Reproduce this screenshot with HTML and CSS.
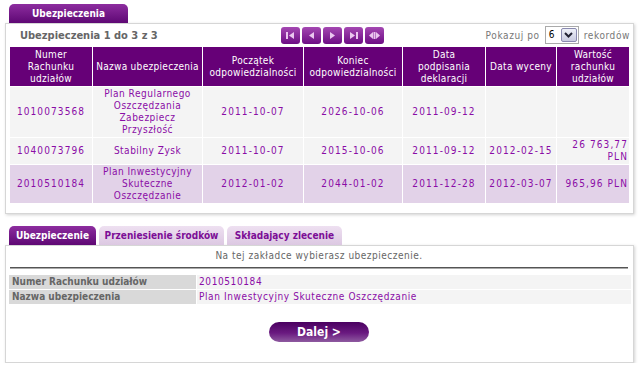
FILE: index.html
```html
<!DOCTYPE html>
<html lang="pl">

<head>
    <meta charset="UTF-8">
    <meta name="viewport" content="width=device-width, initial-scale=1.0">
    <title>Ubezpieczenia</title>
    <link rel="stylesheet" href="styles.css">
</head>

<body>
    <!-- Lista ubezpieczen -->
    <div class="box">
        <div class="tabs">
            <span class="tab active">Ubezpieczenia</span>
        </div>
        <div class="panel">
            <div class="toolbar">
                <div class="title">Ubezpieczenia 1 do 3 z 3</div>
                <div class="pager">
                    <span class="pg"><svg width="9" height="7" viewBox="0 0 9 7"><rect x="0" y="0" width="2" height="7"/><polygon points="8,0 8,7 3,3.5"/></svg></span>
                    <span class="pg"><svg width="9" height="7" viewBox="0 0 9 7"><polygon points="7,0 7,7 2,3.5"/></svg></span>
                    <span class="pg"><svg width="9" height="7" viewBox="0 0 9 7"><polygon points="2,0 2,7 7,3.5"/></svg></span>
                    <span class="pg"><svg width="9" height="7" viewBox="0 0 9 7"><polygon points="1,0 1,7 6,3.5"/><rect x="7" y="0" width="2" height="7"/></svg></span>
                    <span class="pg"><svg width="11" height="7" viewBox="0 0 11 7"><polygon points="4,0 4,7 0,3.5"/><rect x="4.5" y="0" width="2" height="7"/><polygon points="7,0 7,7 11,3.5"/></svg></span>
                </div>
                <div class="page-size">
                    Pokazuj po
                    <span class="select"><span class="val">6</span><span class="arrow"><svg width="9" height="6" viewBox="0 0 9 6"><polyline points="1,1 4.5,4.5 8,1" fill="none" stroke="#223" stroke-width="2"/></svg></span></span>
                    rekordów
                </div>
            </div>

            <table class="grid">
                <colgroup>
                    <col style="width: 82px">
                    <col style="width: 109px">
                    <col style="width: 100px">
                    <col style="width: 98px">
                    <col style="width: 82px">
                    <col style="width: 70px">
                    <col style="width: 72px">
                </colgroup>
                <thead>
                    <tr>
                        <th>Numer Rachunku udziałów</th>
                        <th>Nazwa ubezpieczenia</th>
                        <th>Początek odpowiedzialności</th>
                        <th>Koniec odpowiedzialności</th>
                        <th class="narrow">Data podpisania deklaracji</th>
                        <th>Data wyceny</th>
                        <th>Wartość rachunku udziałów</th>
                    </tr>
                </thead>
                <tbody>
                    <tr>
                        <td class="num">1010073568</td>
                        <td>Plan Regularnego Oszczędzania Zabezpiecz Przyszłość</td>
                        <td class="num">2011-10-07</td>
                        <td class="num">2026-10-06</td>
                        <td class="num">2011-09-12</td>
                        <td class="num"></td>
                        <td class="num amount"></td>
                    </tr>
                    <tr>
                        <td class="num">1040073796</td>
                        <td>Stabilny Zysk</td>
                        <td class="num">2011-10-07</td>
                        <td class="num">2015-10-06</td>
                        <td class="num">2011-09-12</td>
                        <td class="num">2012-02-15</td>
                        <td class="num amount">26 763,77 PLN</td>
                    </tr>
                    <tr class="selected">
                        <td class="num">2010510184</td>
                        <td>Plan Inwestycyjny Skuteczne Oszczędzanie</td>
                        <td class="num">2012-01-02</td>
                        <td class="num">2044-01-02</td>
                        <td class="num">2011-12-28</td>
                        <td class="num">2012-03-07</td>
                        <td class="num amount">965,96 PLN</td>
                    </tr>
                </tbody>
            </table>
        </div>
    </div>

    <!-- Szczegoly wybranego ubezpieczenia -->
    <div class="box second">
        <div class="tabs">
            <span class="tab active t1">Ubezpieczenie</span>
            <span class="tab t2">Przeniesienie środków</span>
            <span class="tab t3">Składający zlecenie</span>
        </div>
        <div class="panel details">
            <p class="intro">Na tej zakładce wybierasz ubezpieczenie.</p>
            <div class="rule"></div>
            <table class="info">
                <tr>
                    <th>Numer Rachunku udziałów</th>
                    <td>2010510184</td>
                </tr>
                <tr>
                    <th>Nazwa ubezpieczenia</th>
                    <td>Plan Inwestycyjny Skuteczne Oszczędzanie</td>
                </tr>
            </table>
            <div class="actions">
                <button class="btn">Dalej &gt;</button>
            </div>
        </div>
    </div>
</body>

</html>
```

FILE: styles.css
```css
body {
    margin: 0;
    font-family: Tahoma, "DejaVu Sans Condensed", "DejaVu Sans", sans-serif;
    font-size: 10px;
    color: #666;
    background-color: white;
}

.box {
    margin: 4px 7px 0 5px;
}

.box.second {
    margin-top: 12px;
}

.tabs {
    display: flex;
    gap: 3px;
    padding-left: 4px;
}

.tab {
    height: 19px;
    line-height: 20px;
    padding: 0 7px;
    border-radius: 5px 5px 0 0;
    font-weight: bold;
    text-align: center;
    color: #7c0e96;
    background: linear-gradient(#eee0f1, #dcc8e2);
}

.tab.active {
    color: white;
    background: linear-gradient(#8d2d9f, #5e0874);
}

.box > .tabs > .tab:only-child {
    width: 119px;
    padding: 0;
}

.t1 { width: 87px; padding: 0; }
.t2 { width: 125px; padding: 0; }
.t3 { width: 115px; padding: 0; }

.panel {
    border: 1px solid #d6d6d6;
    box-shadow: 1px 1px 3px rgba(0, 0, 0, 0.18);
    padding: 0 3px 9px 3px;
    background-color: white;
}

/* toolbar nad tabela */
.toolbar {
    display: flex;
    align-items: center;
    height: 22px;
}

.title {
    width: 261px;
    padding-left: 11px;
    font-weight: bold;
    font-size: 11px;
    color: #666;
}

.pager {
    display: flex;
    gap: 2px;
}

.pg {
    width: 19px;
    height: 17px;
    border-radius: 3px;
    display: flex;
    align-items: center;
    justify-content: center;
    background: linear-gradient(#a448b2, #6d0c84);
}

.pg svg {
    fill: #eac6ef;
}

.page-size {
    margin-left: auto;
    display: flex;
    align-items: center;
    gap: 5px;
    letter-spacing: 0.6px;
    color: #777;
    font-size: 10px;
}

.select {
    display: flex;
    width: 32px;
    height: 16px;
    border: 1px solid #aaa;
    background-color: white;
    letter-spacing: 0;
}

.select .val {
    flex: 1;
    padding-left: 3px;
    line-height: 16px;
    color: #000;
}

.select .arrow {
    width: 14px;
    margin: 1px;
    display: flex;
    align-items: center;
    justify-content: center;
    border: 1px solid #8a8ab0;
    border-radius: 2px;
    background: linear-gradient(#eef0f8, #c9cbe0);
}

/* glowna tabela */
.grid {
    table-layout: fixed;
    width: 621px;
    border-collapse: separate;
    border-spacing: 1px;
}

.grid th {
    height: 36px;
    padding: 2px 2px 1px;
    background-color: #660077;
    color: white;
    font-weight: normal;
    line-height: 12px;
    letter-spacing: 0.3px;
    text-align: center;
}

.grid th.narrow {
    padding: 2px 6px 1px;
}

.grid td {
    padding: 1px 2px;
    line-height: 12px;
    background-color: #f4f4f4;
    color: #8a0ca6;
    text-align: center;
    letter-spacing: 0.5px;
}

.grid td.num {
    letter-spacing: 1.1px;
}

.grid td.amount {
    text-align: right;
    padding-right: 1px;
}

.grid tr.selected td {
    background-color: #e2d2e8;
}

/* szczegoly */
.details {
    padding: 4px 4px 20px 3px;
}

.intro {
    margin: 0;
    line-height: 12px;
    text-align: center;
    letter-spacing: 0.5px;
    color: #666;
}

.rule {
    height: 0;
    margin: 5px 1px 0 1px;
    border-top: 1px solid #555;
    border-bottom: 1px solid #aaa;
}

.info {
    width: 622px;
    margin-top: 5px;
    border-collapse: separate;
    border-spacing: 0 1px;
}

.info th {
    width: 184px;
    height: 14px;
    padding: 0 0 0 3px;
    background-color: #d9d9d9;
    color: #666;
    text-align: left;
    line-height: 14px;
}

.info td {
    padding: 0 0 0 2px;
    background-color: #f4f4f4;
    color: #8a0ca6;
    line-height: 14px;
    letter-spacing: 0.6px;
    border-left: 1px solid white;
}

.actions {
    margin-top: 17px;
    text-align: center;
}

.btn {
    width: 100px;
    height: 20px;
    border: none;
    border-radius: 10px;
    background: linear-gradient(#4a0060, #6a1a80 55%, #8e5aa0);
    color: white;
    font-family: "Liberation Sans Narrow", "DejaVu Sans Condensed", sans-serif;
    font-weight: bold;
    font-size: 12px;
    cursor: pointer;
}
```
